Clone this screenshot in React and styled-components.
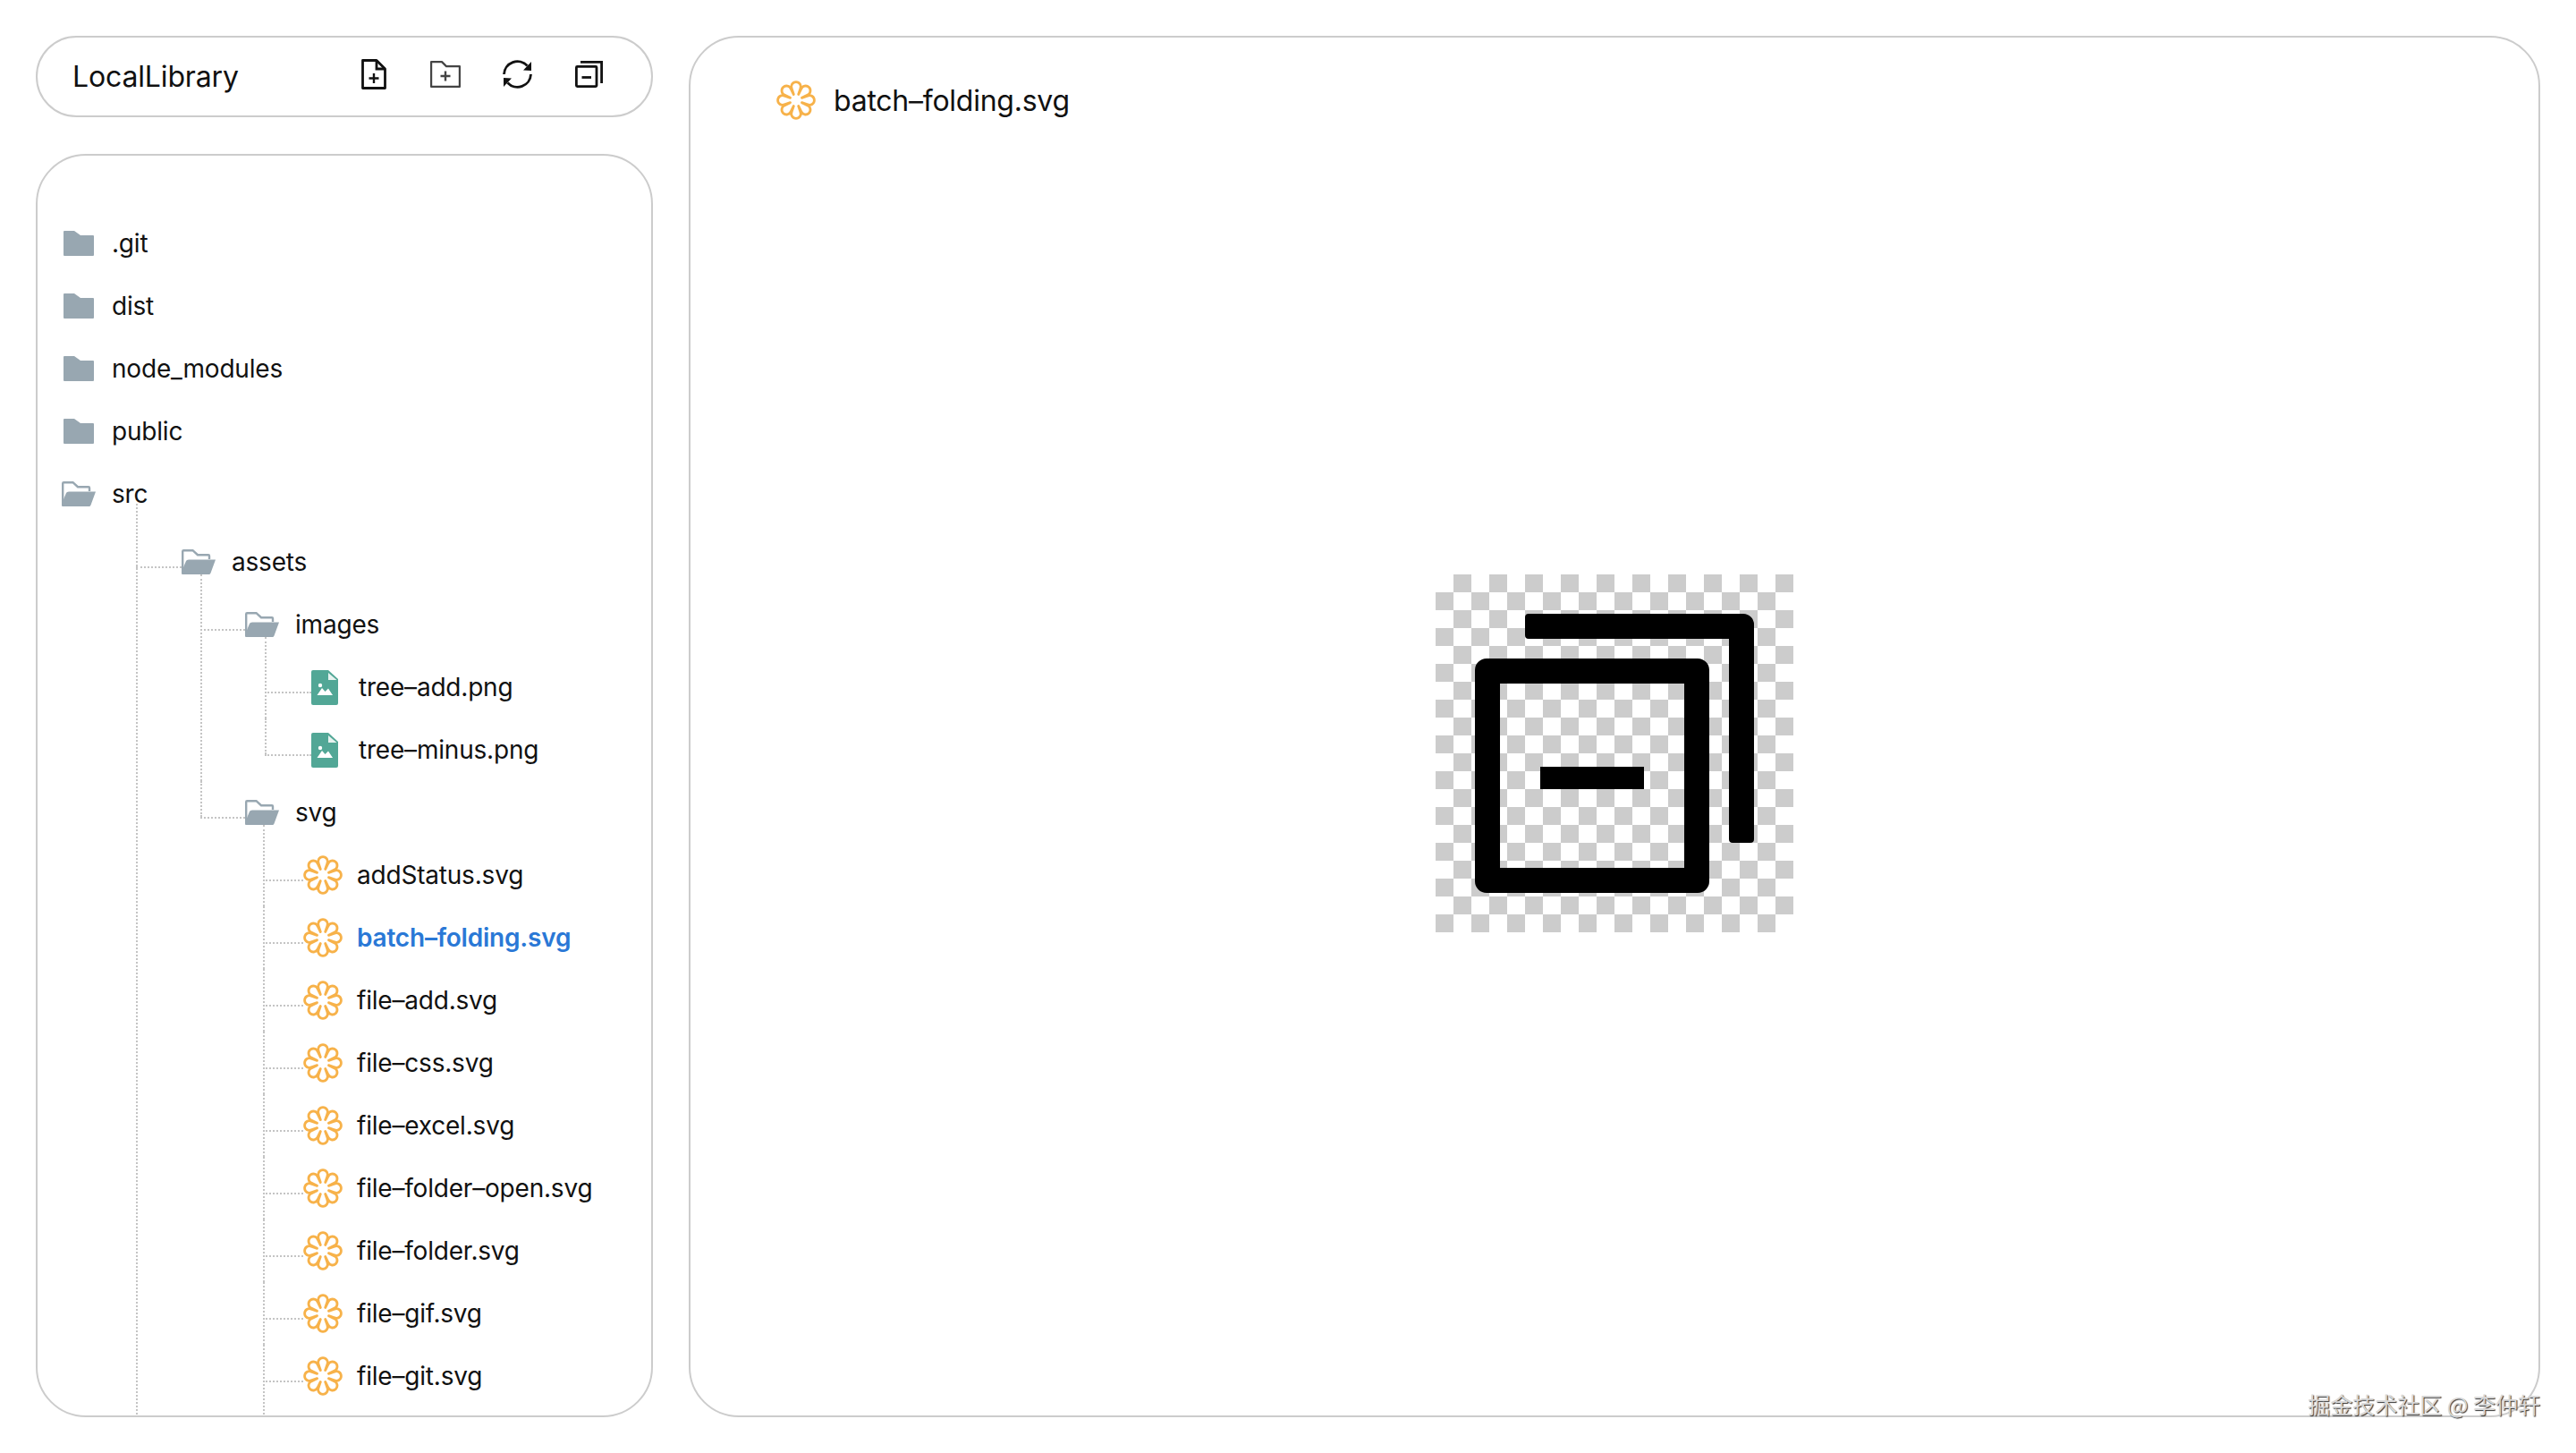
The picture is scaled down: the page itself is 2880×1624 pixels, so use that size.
import styled, { createGlobalStyle } from "styled-components";

const GlobalStyle = createGlobalStyle`
  html, body {
    margin: 0;
    padding: 0;
    background: #fff;
  }
  * {
    box-sizing: border-box;
  }
`;

const svgFiles = [
  "addStatus.svg",
  "batch–folding.svg",
  "file–add.svg",
  "file–css.svg",
  "file–excel.svg",
  "file–folder–open.svg",
  "file–folder.svg",
  "file–gif.svg",
  "file–git.svg",
];

// open: the list runs on below the panel, so its line doesn't stop at the last row
const tree = [
  { name: ".git", kind: "folder" },
  { name: "dist", kind: "folder" },
  { name: "node_modules", kind: "folder" },
  { name: "public", kind: "folder" },
  {
    name: "src",
    kind: "open",
    list: { indent: 110, pad: 51, rise: 30, top: 6, open: true },
    children: [
      {
        name: "assets",
        kind: "open",
        list: { indent: 72, pad: 50, rise: 21 },
        children: [
          {
            name: "images",
            kind: "open",
            list: { indent: 72, pad: 52, rise: 21 },
            children: [
              { name: "tree–add.png", kind: "image" },
              { name: "tree–minus.png", kind: "image" },
            ],
          },
          {
            name: "svg",
            kind: "open",
            list: { indent: 70, pad: 45, rise: 21, open: true },
            children: svgFiles.map((name) => ({
              name,
              kind: "svg",
              active: name === "batch–folding.svg",
            })),
          },
        ],
      },
    ],
  },
];

const gaps = { folder: 18, open: 18, image: 23, svg: 16 };

function ClosedFolder() {
  return (
    <FolderSlot>
      <svg width="34" height="28" viewBox="0 0 34 28">
        <path
          d="M1 0H12L19 5H33a1 1 0 0 1 1 1V27a1 1 0 0 1-1 1H1a1 1 0 0 1-1-1V1a1 1 0 0 1 1-1Z"
          fill="#98a7b1"
        />
      </svg>
    </FolderSlot>
  );
}

function OpenFolder() {
  return (
    <svg width="38" height="28" viewBox="0 0 38 28">
      <path
        d="M1.2 26V2.2Q1.2 1.2 2.2 1.2H12.5L18 6.2H30Q31 6.2 31 7.2V11"
        fill="none"
        stroke="#98a7b1"
        strokeWidth="2.4"
      />
      <path
        d="M8 11.5H38L32.5 26.5Q32 28 30.5 28H1Q0 28 0 27V25L5 13Q5.5 11.5 8 11.5Z"
        fill="#98a7b1"
      />
    </svg>
  );
}

function ImageFile() {
  return (
    <svg width="30" height="39" viewBox="0 0 30 39">
      <path
        d="M2 0H19L30 10V37a2 2 0 0 1-2 2H2a2 2 0 0 1-2-2V2a2 2 0 0 1 2-2Z"
        fill="#52a796"
      />
      <path d="M19 3L28.5 11H19Z" fill="#e6f2ef" />
      <circle cx="10" cy="17" r="2.2" fill="#fff" />
      <path d="M6.5 28L12 20L15.5 24L19 20.5L24 28Z" fill="#fff" />
    </svg>
  );
}

// eight lobes, the sides of two lobes meet in a spoke that points at the centre
const polar = (deg, r) => {
  const a = ((deg - 90) * Math.PI) / 180;
  return `${(r * Math.cos(a)).toFixed(2)} ${(r * Math.sin(a)).toFixed(2)}`;
};
const flowerPath =
  [0, 1, 2, 3, 4, 5, 6, 7]
    .map((i) => {
      const mid = i * 45;
      const start = i === 0 ? "M" : "L";
      return (
        `${start}${polar(mid - 22.5, 7)}L${polar(mid - 20.5, 13.8)}` +
        `A5.3 5.3 0 1 1 ${polar(mid + 20.5, 13.8)}`
      );
    })
    .join("") + "Z";

function SvgFlower() {
  return (
    <svg width="44" height="44" viewBox="-22 -22 44 44">
      <path
        d={flowerPath}
        fill="none"
        stroke="#f7b24a"
        strokeWidth="2.8"
        strokeLinejoin="round"
      />
    </svg>
  );
}

const icons = {
  folder: ClosedFolder,
  open: OpenFolder,
  image: ImageFile,
  svg: SvgFlower,
};

function TreeNode({ node, pad }) {
  const Icon = icons[node.kind];
  return (
    <>
      <Row $pad={pad} $gap={gaps[node.kind]}>
        <Icon />
        <Name $active={node.active}>{node.name}</Name>
      </Row>
      {node.children && (
        <ChildList $indent={node.list.indent} $top={node.list.top}>
          {node.children.map((child) => (
            <ChildItem
              key={child.name}
              $pad={node.list.pad}
              $rise={node.list.rise}
              $open={node.list.open}
            >
              <TreeNode node={child} pad={node.list.pad} />
            </ChildItem>
          ))}
        </ChildList>
      )}
    </>
  );
}

export default function App() {
  return (
    <Page>
      <GlobalStyle />
      <Sidebar>
        <LibraryBar>
          <LibraryTitle>LocalLibrary</LibraryTitle>
          <Tools>
            <ToolButton>
              <svg width="28" height="34" viewBox="0 0 28 34" fill="none" stroke="#111" strokeWidth="2.8">
                <path d="M1.5 1.5H17L26.5 11V32.5H1.5Z" strokeLinejoin="round" />
                <path d="M17 1.5V11H26.5" />
                <path d="M14 16V27M8.5 21.5H19.5" strokeWidth="2.4" />
              </svg>
            </ToolButton>
            <ToolButton>
              <svg width="34" height="30" viewBox="0 0 34 30" fill="none" stroke="#444" strokeWidth="2.2">
                <path d="M1.1 1.1H13L18 6.1H32.9V28.9H1.1Z" strokeLinejoin="round" />
                <path d="M17 11.5V22.5M11.5 17H22.5" strokeWidth="2.4" />
              </svg>
            </ToolButton>
            <ToolButton>
              <svg width="33" height="34" viewBox="0 0 33 34">
                <path d="M1.5 17A15 15 0 0 1 27.5 7.5" fill="none" stroke="#111" strokeWidth="2.8" />
                <path d="M31.5 17A15 15 0 0 1 5.5 26.5" fill="none" stroke="#111" strokeWidth="2.8" />
                <path d="M32 3V13L23 12.5Z" fill="#111" />
                <path d="M1 31V21L10 21.5Z" fill="#111" />
              </svg>
            </ToolButton>
            <ToolButton>
              <svg width="31" height="30" viewBox="0 0 31 30" fill="none" stroke="#111" strokeWidth="2.8">
                <path d="M6 1.4H29.6V25" />
                <rect x="1.4" y="6.4" width="22.6" height="22.2" rx="1" />
                <path d="M7.5 18.5H18" />
              </svg>
            </ToolButton>
          </Tools>
        </LibraryBar>
        <TreePanel>
          <RootList>
            {tree.map((node) => (
              <li key={node.name}>
                <TreeNode node={node} pad={27} />
              </li>
            ))}
          </RootList>
        </TreePanel>
      </Sidebar>
      <Viewer>
        <ViewerTitle>
          <SvgFlower />
          <ViewerName>batch–folding.svg</ViewerName>
        </ViewerTitle>
        <Preview>
          <Checker>
            <svg width="400" height="400" viewBox="0 0 400 400">
              <path
                fillRule="evenodd"
                d="M57 94H293a13 13 0 0 1 13 13V343a13 13 0 0 1-13 13H57a13 13 0 0 1-13-13V107a13 13 0 0 1 13-13ZM72 122V328H278V122Z"
                fill="#000"
              />
              <path
                d="M104 44H344a12 12 0 0 1 12 12V296a4 4 0 0 1-4 4H332a4 4 0 0 1-4-4V72H104a4 4 0 0 1-4-4V48a4 4 0 0 1 4-4Z"
                fill="#000"
              />
              <rect x="117" y="215" width="116" height="25" fill="#000" />
            </svg>
          </Checker>
        </Preview>
      </Viewer>
      <Watermark>掘金技术社区 @ 李仲轩</Watermark>
    </Page>
  );
}

const Page = styled.div`
  position: relative;
  width: 2880px;
  height: 1624px;
  padding: 40px 40px 40px;
  display: grid;
  grid-template-columns: 690px 1fr;
  gap: 40px;
  font-family: Inter, "Noto Sans", sans-serif;
  color: #111;
  overflow: hidden;
`;

const Sidebar = styled.div`
  display: flex;
  flex-direction: column;
  gap: 41px;
  min-height: 0;
`;

const LibraryBar = styled.div`
  flex: 0 0 91px;
  display: flex;
  align-items: center;
  justify-content: space-between;
  padding: 0 50px 0 39px;
  border: 2px solid #ccc;
  border-radius: 46px;
`;

const LibraryTitle = styled.div`
  font-size: 32px;
  letter-spacing: -0.15px;
`;

const Tools = styled.div`
  display: flex;
  gap: 40px;
  margin-bottom: 6px;
`;

const ToolButton = styled.div`
  width: 40px;
  height: 40px;
  display: flex;
  align-items: center;
  justify-content: center;
`;

const TreePanel = styled.div`
  flex: 1;
  min-height: 0;
  padding-top: 63px;
  border: 2px solid #ccc;
  border-radius: 56px;
  overflow: hidden;
`;

const RootList = styled.ul`
  list-style: none;
  margin: 0;
  padding: 0;
`;

const ChildList = styled.ul`
  list-style: none;
  margin: ${(p) => p.$top || 0}px 0 0 ${(p) => p.$indent}px;
  padding: 0;
`;

const ChildItem = styled.li`
  position: relative;

  &::before {
    content: "";
    position: absolute;
    left: 0;
    top: 0;
    bottom: 0;
    border-left: 2px dotted #c4c4c4;
  }

  &:first-child::before {
    top: -${(p) => p.$rise}px;
  }

  &:last-child::before {
    bottom: ${(p) => (p.$open ? "-80px" : "auto")};
    height: ${(p) => (p.$open ? "auto" : "40px")};
  }

  &::after {
    content: "";
    position: absolute;
    left: 0;
    top: 40px;
    width: ${(p) => p.$pad}px;
    border-top: 2px dotted #c4c4c4;
  }
`;

const Row = styled.div`
  position: relative;
  z-index: 1;
  height: 70px;
  display: flex;
  align-items: center;
  gap: ${(p) => p.$gap}px;
  padding-left: ${(p) => p.$pad}px;
`;

const FolderSlot = styled.span`
  display: flex;
  width: 38px;
  justify-content: center;
`;

const Name = styled.span`
  font-size: 28px;
  letter-spacing: -0.2px;
  white-space: nowrap;
  font-weight: ${(p) => (p.$active ? 600 : 400)};
  color: ${(p) => (p.$active ? "#2a78d6" : "#111")};
`;

const Viewer = styled.div`
  display: flex;
  flex-direction: column;
  min-height: 0;
  padding: 48px 0 33px 96px;
  border: 2px solid #ccc;
  border-radius: 56px;
`;

const ViewerTitle = styled.div`
  display: flex;
  align-items: center;
  gap: 20px;
  height: 44px;
`;

const ViewerName = styled.span`
  font-size: 32px;
  letter-spacing: -0.25px;
`;

const Preview = styled.div`
  flex: 1;
  display: flex;
  align-items: center;
  justify-content: center;
  margin-left: -96px;
`;

const Checker = styled.div`
  width: 400px;
  height: 400px;
  background: repeating-conic-gradient(#ccc 0 25%, #fff 0 50%) 0 0 / 40px 40px;
`;

const Watermark = styled.div`
  position: absolute;
  right: 40px;
  bottom: 40px;
  font-family: "Noto Sans CJK SC", sans-serif;
  font-size: 25px;
  line-height: 30px;
  color: #d8d8d8;
  text-shadow: 1px 1px 1px #333;
`;
